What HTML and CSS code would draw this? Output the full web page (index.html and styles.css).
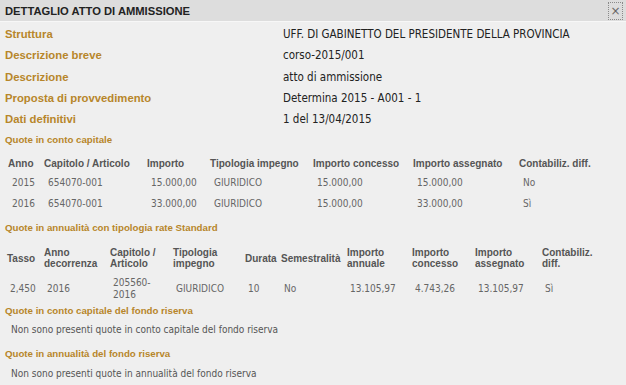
FILE: index.html
```html
<html lang="it">
<head>
  <meta charset="UTF-8" />
  <title>Dettaglio atto di ammissione</title>
  <link rel="stylesheet" href="styles.css">
</head>
<body>

<div class="dialog">
  <!-- Intestazione -->
  <div class="dialog-header">
    <span class="dialog-title">DETTAGLIO ATTO DI AMMISSIONE</span>
    <span class="close-btn">&times;</span>
  </div>

  <!-- Dati principali -->
  <div class="details">
    <div class="label">Struttura</div>
    <div class="value">UFF. DI GABINETTO DEL PRESIDENTE DELLA PROVINCIA</div>
    <div class="label">Descrizione breve</div>
    <div class="value">corso-2015/001</div>
    <div class="label">Descrizione</div>
    <div class="value">atto di ammissione</div>
    <div class="label">Proposta di provvedimento</div>
    <div class="value">Determina 2015 - A001 - 1</div>
    <div class="label">Dati definitivi</div>
    <div class="value">1 del 13/04/2015</div>
  </div>

  <!-- Quote in conto capitale -->
  <h3 class="section-title s1">Quote in conto capitale</h3>
  <table class="grid grid-capitale">
    <thead>
      <tr>
        <th>Anno</th><th>Capitolo / Articolo</th><th>Importo</th><th>Tipologia impegno</th>
        <th>Importo concesso</th><th>Importo assegnato</th><th>Contabiliz. diff.</th>
      </tr>
    </thead>
    <tbody>
      <tr>
        <td>2015</td><td>654070-001</td><td>15.000,00</td><td>GIURIDICO</td>
        <td>15.000,00</td><td>15.000,00</td><td>No</td>
      </tr>
      <tr>
        <td>2016</td><td>654070-001</td><td>33.000,00</td><td>GIURIDICO</td>
        <td>15.000,00</td><td>33.000,00</td><td>Sì</td>
      </tr>
    </tbody>
  </table>

  <!-- Quote in annualità -->
  <h3 class="section-title s2">Quote in annualità con tipologia rate Standard</h3>
  <table class="grid grid-annualita">
    <thead>
      <tr>
        <th>Tasso</th><th>Anno decorrenza</th><th>Capitolo / Articolo</th><th>Tipologia impegno</th>
        <th>Durata</th><th>Semestralità</th><th>Importo annuale</th><th>Importo concesso</th>
        <th>Importo assegnato</th><th>Contabiliz. diff.</th>
      </tr>
    </thead>
    <tbody>
      <tr>
        <td>2,450</td><td>2016</td><td>205560-2016</td><td>GIURIDICO</td>
        <td>10</td><td>No</td><td>13.105,97</td><td>4.743,26</td>
        <td>13.105,97</td><td>Sì</td>
      </tr>
    </tbody>
  </table>

  <!-- Fondo riserva -->
  <h3 class="section-title s3">Quote in conto capitale del fondo riserva</h3>
  <p class="empty">Non sono presenti quote in conto capitale del fondo riserva</p>

  <h3 class="section-title s4">Quote in annualità del fondo riserva</h3>
  <p class="empty e4">Non sono presenti quote in annualità del fondo riserva</p>
</div>

</body>
</html>
```

FILE: styles.css
```css
/* Stili di base */
body {
  margin: 0;
  background: #efefef;
  font-family: 'Liberation Sans', Arial, sans-serif;
  color: #333;
}
.dialog {
  width: 626px;
  height: 385px;
  overflow: hidden;
}
.dialog-header {
  height: 21px;
  background: #dddddd;
  border-bottom: 1px solid #f7f7f7;
  display: flex;
  align-items: center;
  justify-content: space-between;
  padding: 0 3px 0 5px;
}
.dialog-title {
  font-size: 11.2px;
  font-weight: bold;
  color: #222;
}
.close-btn {
  width: 13px;
  height: 16px;
  border: 1px dotted #8a8a8a;
  font-family: 'DejaVu Sans', sans-serif;
  font-size: 12px;
  line-height: 16px;
  text-align: center;
  color: #666;
}
.details {
  display: grid;
  grid-template-columns: 278px 1fr;
  grid-auto-rows: 21.25px;
  align-items: center;
  padding: 1.5px 5px 0;
}
.label {
  font-size: 11.3px;
  font-weight: bold;
  color: #b7862a;
}
.value {
  font-family: 'DejaVu Sans Condensed', 'DejaVu Sans', sans-serif;
  font-size: 11.5px;
  color: #222;
}
.section-title {
  margin: 0 0 0 5px;
  line-height: 14px;
  font-size: 9.7px;
  font-weight: bold;
  color: #b7862a;
}
.s1 { margin-top: 3px; }
.s2 { margin-top: 7.5px; }
.s3 { margin-top: 1px; }
.s4 { margin-top: 10px; }
.grid {
  border-collapse: collapse;
  table-layout: fixed;
  margin-left: 4px;
  font-size: 10px;
}
.grid th {
  text-align: left;
  font-weight: bold;
  color: #555;
  padding: 0 0 0 4px;
  vertical-align: middle;
}
.grid td {
  font-family: 'DejaVu Sans Condensed', 'DejaVu Sans', sans-serif;
  color: #666;
  padding: 0 0 0 8px;
  height: 21px;
}
.grid-capitale {
  margin-top: 9px;
}
.grid-capitale th {
  height: 16px;
}
.grid-capitale th:nth-child(1) { width: 32px; }
.grid-capitale th:nth-child(2) { width: 99px; }
.grid-capitale th:nth-child(3) { width: 59px; }
.grid-capitale th:nth-child(4) { width: 99px; }
.grid-capitale th:nth-child(5) { width: 96px; }
.grid-capitale th:nth-child(6) { width: 102px; }
.grid-capitale th:nth-child(7) { width: 90px; }
.grid-annualita {
  margin-top: 10px;
}
.grid-annualita th {
  padding-left: 3px;
  line-height: 11px;
  height: 26px;
}
.grid-annualita td {
  line-height: 12px;
  height: 32px;
  padding-top: 3px;
  padding-left: 6px;
}
.grid-annualita th:nth-child(1) { width: 34px; }
.grid-annualita th:nth-child(2) { width: 63px; }
.grid-annualita th:nth-child(3) { width: 60px; }
.grid-annualita th:nth-child(4) { width: 69px; }
.grid-annualita th:nth-child(5) { width: 33px; }
.grid-annualita th:nth-child(6) { width: 63px; }
.grid-annualita th:nth-child(7) { width: 62px; }
.grid-annualita th:nth-child(8) { width: 60px; }
.grid-annualita th:nth-child(9) { width: 64px; }
.grid-annualita th:nth-child(10) { width: 60px; }
.empty {
  margin: 5px 0 0 11px;
  line-height: 14px;
  font-family: 'DejaVu Sans Condensed', 'DejaVu Sans', sans-serif;
  font-size: 10px;
  color: #555;
}
.e4 { margin-top: 6px; }
```
